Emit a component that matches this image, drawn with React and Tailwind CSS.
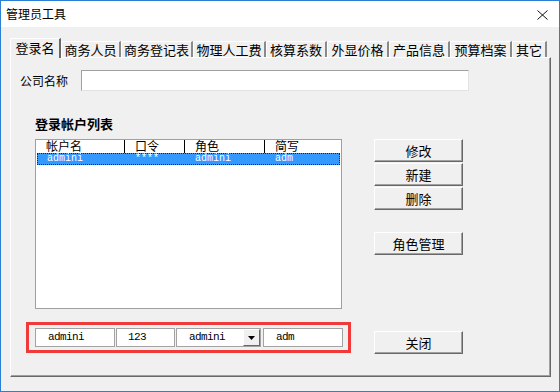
import React from 'react';

const tabs = [
  { label: '登录名', w: 'w-[51px]', active: true },
  { label: '商务人员', w: 'w-[60px]' },
  { label: '商务登记表', w: 'w-[72px]' },
  { label: '物理人工费', w: 'w-[73px]' },
  { label: '核算系数', w: 'w-[61px]' },
  { label: '外显价格', w: 'w-[62px]' },
  { label: '产品信息', w: 'w-[61px]' },
  { label: '预算档案', w: 'w-[62px]' },
  { label: '其它', w: 'w-[35px]' },
];

const cols = [
  { title: '帐户名', value: 'admini', w: 'w-[89px]' },
  { title: '口令', value: '****', w: 'w-[60px]' },
  { title: '角色', value: 'admini', w: 'w-[80px]' },
  { title: '简写', value: 'adm', w: 'flex-1' },
];

const mono = "font-['Liberation_Mono',monospace] text-[11px] tracking-[-0.6px]";

function WinButton({ children, className = '' }) {
  return (
    <div
      className={`h-[23px] w-[89px] flex items-center justify-center bg-[#f0f0f0] border-t border-l border-white border-r border-b border-r-[#696969] border-b-[#696969] shadow-[inset_-1px_-1px_0_#a0a0a0] text-[13px] leading-none ${className}`}
    >
      {children}
    </div>
  );
}

export default function App() {
  return (
    <div className="w-[560px] h-[392px] bg-[#f0f0f0] border border-[#2b7fd4] flex flex-col text-black font-['Noto_Sans_CJK_SC',sans-serif] overflow-hidden">
      {/* Title bar */}
      <div className="h-[26px] bg-white flex items-center justify-between pl-[5px] pr-[11px] flex-shrink-0">
        <span className="text-[12px] leading-none">管理员工具</span>
        <svg width="11" height="10" viewBox="0 0 11 10" className="mt-[1px]">
          <path d="M0.5 0.5 L10.5 9.5 M10.5 0.5 L0.5 9.5" stroke="#111" strokeWidth="1" fill="none" />
        </svg>
      </div>

      <div className="pl-[9px] pt-[11px]">
        {/* Tabs */}
        <div className="flex items-end h-[19px]">
          {tabs.map((t) =>
            t.active ? (
              <div
                key={t.label}
                className={`${t.w} h-[20px] -mb-[1px] relative z-10 bg-[#f0f0f0] border-t border-l border-white border-r-2 border-r-[#696969] rounded-tl-[2px] flex items-start justify-center pt-[1px] text-[13px] leading-[15px]`}
              >
                {t.label}
              </div>
            ) : (
              <div
                key={t.label}
                className={`${t.w} h-[16px] bg-[#f0f0f0] border-t border-l border-white border-r-2 border-r-[#8a8a8a] rounded-tl-[2px] flex items-center justify-center text-[13px] leading-[15px]`}
              >
                {t.label}
              </div>
            )
          )}
        </div>

        {/* Tab panel */}
        <div className="w-[541px] h-[320px] border-t border-l border-white border-r border-b border-r-[#696969] border-b-[#696969] shadow-[inset_-1px_-1px_0_#a0a0a0] text-[12px]">
          <div className="flex items-center mt-[12px] ml-[9px]">
            <span className="w-[61px] leading-none">公司名称</span>
            <div className="w-[388px] h-[21px] bg-white border border-t-[#a0a0a0] border-l-[#a0a0a0] border-r-[#e3e3e3] border-b-[#e3e3e3]" />
          </div>

          <div className="mt-[25px] ml-[24px] text-[13px] font-bold leading-[16px]">登录帐户列表</div>

          <div className="flex mt-[7px]">
            {/* List view */}
            <div className="ml-[24px] w-[307px] h-[170px] bg-white border border-[#a0a0a0]">
              <div className="flex h-[13px]">
                {cols.map((c, i) => (
                  <div
                    key={c.title}
                    className={`${c.w} h-[13px] pl-[10px] pb-[1px] flex items-start ${i < 3 ? 'border-r border-black' : ''}`}
                  >
                    <span className="text-[12px] leading-[12px] whitespace-nowrap">{c.title}</span>
                  </div>
                ))}
              </div>
              <div className="mx-[1px] h-[12px] flex bg-[#3399ff] border border-dotted border-[#222] text-white">
                {cols.map((c, i) => (
                  <div
                    key={c.title}
                    className={`${i === 0 ? 'w-[88px]' : c.w} pl-[9px] leading-[10px] font-['Liberation_Mono',monospace] text-[10px]`}
                  >
                    {c.value}
                  </div>
                ))}
              </div>
            </div>

            {/* Buttons */}
            <div className="ml-[32px] flex flex-col gap-[1px]">
              <WinButton>修改</WinButton>
              <WinButton>新建</WinButton>
              <WinButton>删除</WinButton>
              <WinButton className="mt-[21px]">角色管理</WinButton>
            </div>
          </div>

          <div className="flex mt-[13px]">
            {/* Red highlight with edit fields */}
            <div className="ml-[15px] w-[325px] h-[31px] border-[3px] border-[#f03a3a] pl-[6px] pt-[3px] flex items-start">
              <div className={`w-[80px] h-[19px] bg-white border border-[#a3a3a3] pl-[12px] flex items-center ${mono}`}>admini</div>
              <div className={`ml-[1px] w-[59px] h-[19px] bg-white border border-[#a3a3a3] pl-[11px] flex items-center ${mono}`}>123</div>
              <div className={`ml-[1px] w-[85px] h-[19px] bg-white border border-[#a3a3a3] pl-[12px] flex items-center justify-between ${mono}`}>
                <span>admini</span>
                <div className="w-[17px] h-[17px] bg-[#f0f0f0] border-t border-l border-white border-r border-b border-r-[#696969] border-b-[#696969] flex items-center justify-center">
                  <svg width="7" height="4" viewBox="0 0 7 4">
                    <path d="M0 0 H7 L3.5 4 Z" fill="#000" />
                  </svg>
                </div>
              </div>
              <div className={`ml-[2px] w-[80px] h-[19px] bg-white border border-[#a3a3a3] pl-[12px] flex items-center ${mono}`}>adm</div>
            </div>

            <WinButton className="ml-[23px] mt-[9px]">关闭</WinButton>
          </div>
        </div>
      </div>
    </div>
  );
}
